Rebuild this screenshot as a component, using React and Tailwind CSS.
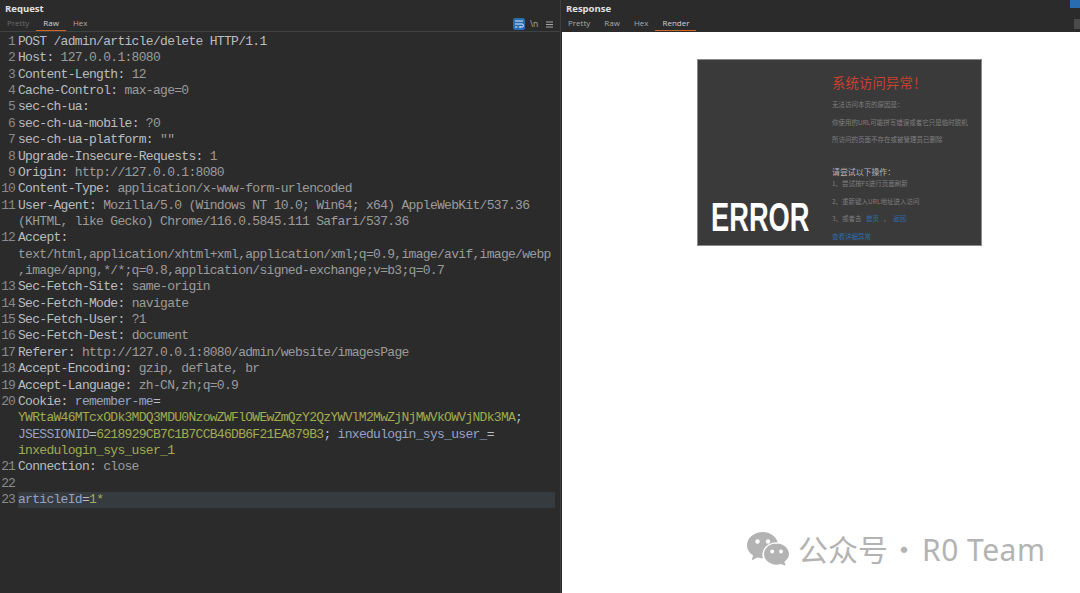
const K = ({ children }) => <span className="text-[#b9bdc1]">{children}</span>;
const V = ({ children }) => <span className="text-[#9b9b9b]">{children}</span>;
const B = ({ children }) => <span className="text-[#96a2c4]">{children}</span>;
const G = ({ children }) => <span className="text-[#a0ac50]">{children}</span>;

const H = (k, v) => [<><K>{k}: </K><V>{v}</V></>];

const lines = [
  [<K>POST /admin/article/delete HTTP/1.1</K>],
  H("Host", "127.0.0.1:8080"),
  H("Content-Length", "12"),
  H("Cache-Control", "max-age=0"),
  [<K>sec-ch-ua:</K>],
  H("sec-ch-ua-mobile", "?0"),
  H("sec-ch-ua-platform", "\"\""),
  H("Upgrade-Insecure-Requests", "1"),
  H("Origin", "http://127.0.0.1:8080"),
  H("Content-Type", "application/x-www-form-urlencoded"),
  [
    <><K>User-Agent: </K><V>Mozilla/5.0 (Windows NT 10.0; Win64; x64) AppleWebKit/537.36</V></>,
    <V>(KHTML, like Gecko) Chrome/116.0.5845.111 Safari/537.36</V>,
  ],
  [
    <K>Accept:</K>,
    <V>text/html,application/xhtml+xml,application/xml;q=0.9,image/avif,image/webp</V>,
    <V>,image/apng,*/*;q=0.8,application/signed-exchange;v=b3;q=0.7</V>,
  ],
  H("Sec-Fetch-Site", "same-origin"),
  H("Sec-Fetch-Mode", "navigate"),
  H("Sec-Fetch-User", "?1"),
  H("Sec-Fetch-Dest", "document"),
  H("Referer", "http://127.0.0.1:8080/admin/website/imagesPage"),
  H("Accept-Encoding", "gzip, deflate, br"),
  H("Accept-Language", "zh-CN,zh;q=0.9"),
  [
    <><K>Cookie: </K><B>remember-me</B><K>=</K></>,
    <><G>YWRtaW46MTcxODk3MDQ3MDU0NzowZWFlOWEwZmQzY2QzYWVlM2MwZjNjMWVkOWVjNDk3MA</G><K>;</K></>,
    <><B>JSESSIONID</B><K>=</K><G>6218929CB7C1B7CCB46DB6F21EA879B3</G><K>; </K><B>inxedulogin_sys_user_</B><K>=</K></>,
    <G>inxedulogin_sys_user_1</G>,
  ],
  H("Connection", "close"),
  [<span>&nbsp;</span>],
  [<><B>articleId</B><K>=</K><G>1*</G></>],
];

function Tab({ label, active, dim }) {
  return (
    <div className={`h-[14px] flex items-start px-[7px] border-b-[1.5px] ${active ? "border-[#d0632a] text-[#d2d2d2]" : "border-transparent"} ${dim ? "text-[#6c6c6c]" : active ? "" : "text-[#a8a8a8]"}`}>
      {label}
    </div>
  );
}

function Line({ n, rows }) {
  const hl = n === 23;
  return (
    <div className="flex">
      <div className="w-[17px] shrink-0 text-right text-[#8a8a8a] tracking-[-0.9px] pr-[2px]">{n}</div>
      <div className={`ml-[1px] w-[537px] ${hl ? "bg-[#363b40]" : ""}`}>
        {rows.map((r, i) => (
          <div key={i} className="whitespace-pre">{r}</div>
        ))}
      </div>
    </div>
  );
}

function ErrorCard() {
  const row = "h-[17.5px] leading-[17.5px]";
  return (
    <div className="w-[285px] h-[187px] bg-[#3a3a3a] border border-[#8a8a8a] flex relative font-['Noto_Sans_CJK_SC','Liberation_Sans',sans-serif]">
      <div className="w-[134px] shrink-0 flex flex-col justify-end pb-[8px] pl-[13px]">
        <div className="font-['Liberation_Sans',sans-serif] font-bold text-[41px] leading-[40px] text-white origin-left scale-x-[0.665] whitespace-nowrap">ERROR</div>
      </div>
      <div className="flex-1 pt-[13px] text-[6.5px] text-[#7f7f7f] whitespace-nowrap">
        <div className="text-[#c9402f] text-[13.3px] leading-[20px] h-[23px] tracking-[0.2px]">系统访问异常！</div>
        <div className={row}>无法访问本页的原因是：</div>
        <div className={row}>你使用的URL可能拼写错误或者它只是临时脱机</div>
        <div className={row}>所访问的页面不存在或被管理员已删除</div>
        <div className="h-[14px]" />
        <div className="text-[#b5b5b5] text-[7.9px] h-[12.5px] leading-[18px]">请尝试以下操作：</div>
        <div className={row}>1、尝试按F5进行页面刷新</div>
        <div className={row}>2、重新键入URL地址进入访问</div>
        <div className={row}>3、或者去 <span className="text-[#2f6db0] ml-[3px]">首页</span> <span className="mx-[3px]">、</span><span className="text-[#2f6db0]">返回</span></div>
        <div className={`${row} text-[#2f6db0]`}>查看详细异常</div>
      </div>
    </div>
  );
}

function WeChat() {
  return (
    <svg width="42" height="34" viewBox="0 0 42 34" className="shrink-0">
      <path d="M16 0C7.2 0 0 5.9 0 13.2c0 4.2 2.4 7.9 6.1 10.3L4.600 28.400l5.600-2.900c1.800.5 3.700.8 5.800.9-.4-1.200-.6-2.400-.6-3.700 0-6.900 6.400-12.400 14.200-12.400h1.200C29 4.300 23 0 16 0z" fill="#b3b3b3" />
      <circle cx="10.500" cy="9.500" r="2.200" fill="#fff" />
      <circle cx="21" cy="9.500" r="2.200" fill="#fff" />
      <path d="M29.500 11.500c-6.900 0-12.500 4.700-12.500 10.600s5.600 10.600 12.500 10.600c1.600 0 3.100-.3 4.500-.7l4.600 1.700-1.200-4c2.800-2 4.600-4.700 4.600-7.600 0-5.900-5.600-10.600-12.500-10.600z" fill="#b3b3b3" />
      <circle cx="25.200" cy="19.500" r="1.900" fill="#fff" />
      <circle cx="34" cy="19.500" r="1.900" fill="#fff" />
    </svg>
  );
}

export default function App() {
  return (
    <div className="w-[1080px] h-[593px] overflow-hidden flex bg-[#2b2b2b] relative antialiased font-['Open_Sans','Liberation_Sans',sans-serif]">
      {/* Request */}
      <div className="w-[561px] shrink-0 h-full flex flex-col border-r border-[#3e3e3e]">
        <div className="h-[32px] shrink-0 border-b border-[#424242] flex flex-col relative">
          <div className="text-[9.5px] font-bold text-[#e0e0e0] pl-[5px] pt-[2px] h-[14px] leading-[14px]">Request</div>
          <div className="flex text-[8px] leading-[12px] mt-[3px]">
            <Tab label="Pretty" dim />
            <Tab label="Raw" active />
            <Tab label="Hex" />
          </div>
          <div className="absolute right-[7px] top-[18px] flex items-center gap-[8px]">
            <div className="w-[12px] h-[12px] -mr-[3px] rounded-[2px] bg-[#2a6cb0] flex items-center justify-center">
              <svg width="10" height="8" viewBox="0 0 10 8" fill="none" stroke="#dfe9f4" strokeWidth="1">
                <path d="M1 1h8M1 4h7a1.300 1.300 0 0 1 0 3H5.500M1 7h2.500" />
                <path d="M6.500 6l-1 1 1 1" />
              </svg>
            </div>
            <div className="text-[8.5px] text-[#a8a8a8] leading-none w-[8px]">\n</div>
            <svg width="7" height="7" viewBox="0 0 7 7" stroke="#a8a8a8" strokeWidth="1"><path d="M0 1h7M0 3.500h7M0 6h7" /></svg>
          </div>
        </div>
        <div className="flex-1 pt-[2px] font-['Liberation_Mono',monospace] text-[13px] leading-[16.36px] tracking-[-0.7px] subpixel-antialiased">
          {lines.map((rows, i) => (
            <Line key={i} n={i + 1} rows={rows} />
          ))}
        </div>
      </div>

      {/* Response */}
      <div className="flex-1 h-full flex flex-col ml-[1px]">
        <div className="h-[32px] shrink-0 flex flex-col relative">
          <div className="text-[9.5px] font-bold text-[#e0e0e0] pl-[4px] pt-[2px] h-[14px] leading-[14px]">Response</div>
          <div className="flex text-[8px] leading-[12px] mt-[3px] -ml-[1px]">
            <Tab label="Pretty" />
            <Tab label="Raw" />
            <Tab label="Hex" />
            <Tab label="Render" active />
          </div>
          <div className="absolute right-0 top-0 w-[10px] h-[8px] bg-[#2a6cb0]" />
          <div className="absolute right-0 top-[19px] w-[6px] h-[10px] bg-[#4a4a4a]" />
        </div>
        <div className="flex-1 bg-white pt-[27px] pl-[134px] relative border-l border-white">
          <ErrorCard />
          <div className="absolute left-[184px] top-[499px] flex items-center gap-[9px] text-[#b3b3b3] whitespace-nowrap">
            <WeChat />
            <span className="text-[30px] leading-[34px] font-['Noto_Sans_CJK_SC','Noto_Sans',sans-serif]">公众号<span className="ml-[1px] mr-[3px]">·</span><span className="font-['Noto_Sans',sans-serif] tracking-[0.5px]">R0 Team</span></span>
          </div>
        </div>
      </div>
    </div>
  );
}
